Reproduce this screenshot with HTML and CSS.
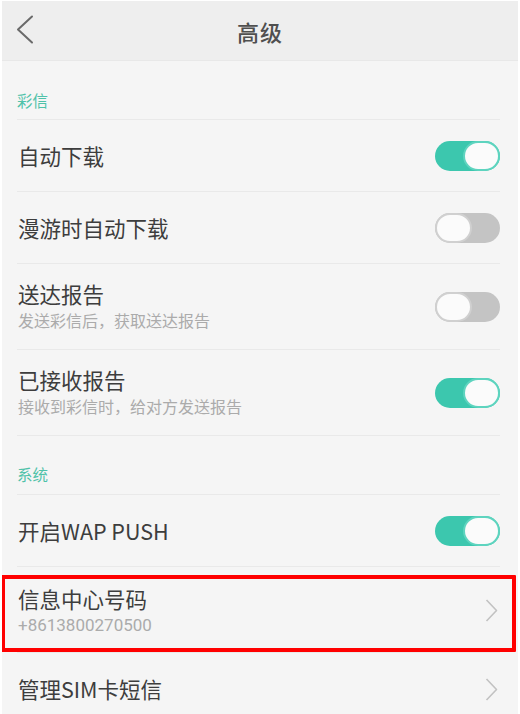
FILE: index.html
```html
<!DOCTYPE html>
<html lang="zh-CN">
<head>
<meta charset="utf-8">
<title>高级</title>
<link rel="stylesheet" href="styles.css">
</head>
<body>
<div class="frame">
  <header class="topbar">
    <svg class="back" width="18" height="30" viewBox="0 0 18 30"><polyline points="16,1.5 2,14.5 16,27.5" fill="none" stroke="#6a6a6a" stroke-width="2" stroke-linecap="round" stroke-linejoin="round"/></svg>
    <h1 class="title">高级</h1>
  </header>
  <div class="list">
    <div class="section">彩信</div>
    <div class="row">
      <div class="texts"><div class="label">自动下载</div></div>
      <span class="switch on"><span class="knob"></span></span>
    </div>
    <div class="row">
      <div class="texts"><div class="label">漫游时自动下载</div></div>
      <span class="switch off"><span class="knob"></span></span>
    </div>
    <div class="row tall">
      <div class="texts"><div class="label">送达报告</div><div class="sub">发送彩信后，获取送达报告</div></div>
      <span class="switch off"><span class="knob"></span></span>
    </div>
    <div class="row tall">
      <div class="texts"><div class="label">已接收报告</div><div class="sub">接收到彩信时，给对方发送报告</div></div>
      <span class="switch on"><span class="knob"></span></span>
    </div>
    <div class="section sys">系统</div>
    <div class="row">
      <div class="texts"><div class="label">开启WAP PUSH</div></div>
      <span class="switch on"><span class="knob"></span></span>
    </div>
    <div class="row tall highlight">
      <div class="texts"><div class="label">信息中心号码</div><div class="sub num">+8613800270500</div></div>
      <svg class="chev" width="13" height="23" viewBox="0 0 13 23"><polyline points="1.5,1 11.5,11.5 1.5,22" fill="none" stroke="#c2c2c2" stroke-width="1.6" stroke-linejoin="round"/></svg>
    </div>
    <div class="row last">
      <div class="texts"><div class="label">管理SIM卡短信</div></div>
      <svg class="chev" width="13" height="23" viewBox="0 0 13 23"><polyline points="1.5,1 11.5,11.5 1.5,22" fill="none" stroke="#c2c2c2" stroke-width="1.6" stroke-linejoin="round"/></svg>
    </div>
  </div>
</div>
</body>
</html>
```
FILE: styles.css
```css
html, body {
  margin: 0;
  padding: 0;
  background: #ffffff;
}
body {
  font-family: "Noto Sans CJK SC", "Noto Sans", sans-serif;
  width: 520px;
  height: 714px;
  overflow: hidden;
}
.frame {
  border-top: 1px solid #ffffff;
  border-left: 2px solid #ffffff;
  border-right: 2px solid #ffffff;
  background: #f5f5f5;
  height: 713px;
  overflow: hidden;
}
.topbar {
  height: 59px;
  background: #eeeeee;
  border-bottom: 1px solid #e8e8e8;
  display: flex;
  align-items: center;
  justify-content: center;
  position: relative;
}
.back {
  position: absolute;
  left: 14px;
  top: 14px;
}
.title {
  margin: 0;
  font-size: 22px;
  font-weight: 500;
  color: #4f4f4f;
  line-height: 1;
  letter-spacing: 1px;
}
.list {
  margin: 0 18px 0 15px;
}
.section {
  height: 59px;
  box-sizing: border-box;
  padding-top: 29px;
  font-size: 15.5px;
  line-height: 20px;
  color: #4fc2a9;
  border-bottom: 1px solid #e9e9e9;
}
.section.sys {
  height: 59px;
  padding-top: 28px;
}
.row {
  height: 72px;
  box-sizing: border-box;
  border-bottom: 1px solid #e9e9e9;
  display: flex;
  align-items: center;
  justify-content: space-between;
  position: relative;
}
.row.tall {
  height: 86px;
}
.row.last {
  border-bottom: none;
}
.texts {
  display: flex;
  flex-direction: column;
  padding-left: 1px;
}
.label {
  font-size: 21.5px;
  line-height: 28px;
  color: #3d3d3d;
}
.sub {
  font-size: 16px;
  line-height: 22px;
  color: #ababab;
  margin-top: 1px;
}
.sub.num {
  font-family: "Roboto", "Noto Sans", sans-serif;
  font-size: 17px;
}
.tall .texts {
  margin-top: -2px;
}
.highlight .texts {
  margin-top: 2px;
}
.switch {
  width: 65px;
  height: 30px;
  border-radius: 15px;
  box-sizing: border-box;
  display: flex;
  align-items: center;
}
.switch.on {
  background: #3cc7ae;
  justify-content: flex-end;
}
.switch.off {
  background: #c4c4c4;
  justify-content: flex-start;
}
.knob {
  width: 37px;
  height: 30px;
  border-radius: 15px;
  background: #fbfbfb;
  box-sizing: border-box;
}
.on .knob {
  border: 2px solid #5ed4bf;
}
.off .knob {
  border: 2px solid #d0d0d0;
}
.chev {
  margin-right: 2px;
  margin-top: 0;
}
.highlight .chev {
  margin-top: 2px;
}
.highlight::after {
  content: "";
  position: absolute;
  left: -16px;
  right: -16px;
  top: 8px;
  bottom: 0;
  border: 4px solid #ff0000;
  border-radius: 1px;
  pointer-events: none;
}
```
